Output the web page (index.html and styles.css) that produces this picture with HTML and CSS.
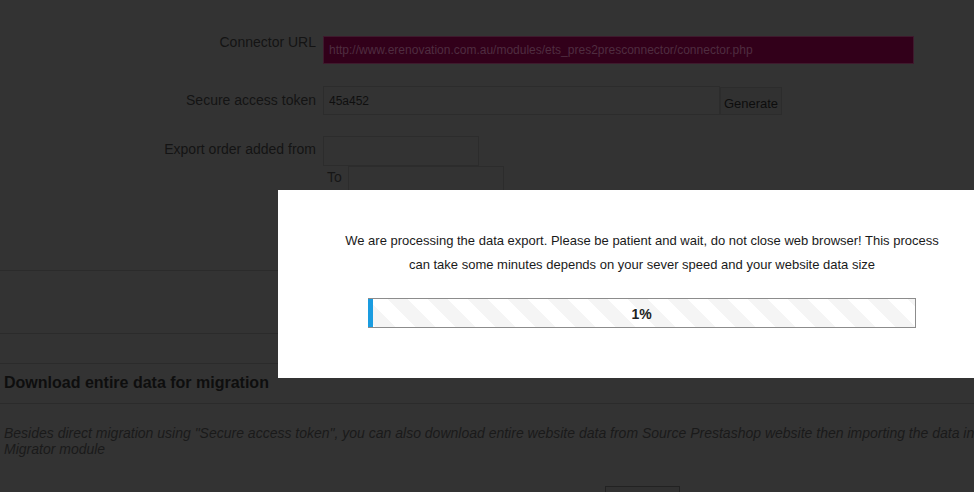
FILE: index.html
```html
<!DOCTYPE html>
<html>
<head>
<meta charset="utf-8">
<link rel="stylesheet" href="styles.css">
</head>
<body>
<div class="page">
  <form class="form">
    <div class="row row-url">
      <div class="lbl">Connector URL</div>
      <div class="ctrl"><input class="inp inp-url" type="text" value="http://www.erenovation.com.au/modules/ets_pres2presconnector/connector.php"></div>
    </div>
    <div class="row row-token">
      <div class="lbl">Secure access token</div>
      <div class="ctrl"><input class="inp inp-token" type="text" value="45a452"><button type="button" class="btn-gen">Generate</button></div>
    </div>
    <div class="row row-date">
      <div class="lbl">Export order added from</div>
      <div class="ctrl ctrl-col">
        <input class="inp inp-date" type="text">
        <div class="to-row"><span class="to">To</span><input class="inp inp-date" type="text"></div>
      </div>
    </div>
  </form>
  <div class="sep sep1"></div>
  <div class="blank"></div>
  <div class="sep"></div>
  <div class="gap"></div>
  <div class="sep"></div>
  <h3 class="heading">Download entire data for migration</h3>
  <div class="sep"></div>
  <p class="desc">Besides direct migration using "Secure access token", you can also download entire website data from Source Prestashop website then importing the data into Migrator module</p>
  <div class="dl-row"><button type="button" class="btn-dl">Download</button></div>
</div>

<div class="modal">
  <p class="msg">We are processing the data export. Please be patient and wait, do not close web browser! This process can take some minutes depends on your sever speed and your website data size</p>
  <div class="progress">
    <div class="fill" style="width:1%"></div>
    <span class="pct">1%</span>
  </div>
</div>
</body>
</html>
```
FILE: styles.css
```css
html, body {
  margin: 0;
  padding: 0;
  width: 974px;
  height: 492px;
  overflow: hidden;
  background: #333333;
  font-family: "Liberation Sans", Arial, sans-serif;
}
.page {
  padding-top: 36px;
  color: #1b1b1b;
}
.form {
  margin: 0;
}
.row {
  display: grid;
  grid-template-columns: 316px 1fr;
  column-gap: 7px;
}
.row .lbl {
  text-align: right;
  font-size: 14px;
  line-height: 16px;
  color: #141414;
}
.row-url .lbl { margin-top: -2px; }
.row-token { margin-top: 22px; }
.row-token .lbl { padding-top: 6px; }
.row-date { margin-top: 21px; }
.row-date .lbl { padding-top: 5px; }
.ctrl { display: flex; }
.ctrl-col { flex-direction: column; align-items: flex-start; }
.inp {
  box-sizing: border-box;
  font-family: "Liberation Sans", Arial, sans-serif;
  font-size: 12px;
  padding: 0 5px;
  margin: 0;
  outline: none;
  border: 1px solid #2c2c2c;
  background: #333333;
  color: #0f0f0f;
}
.inp-url {
  width: 591px;
  height: 28px;
  background: #32001a;
  border-color: #3e1a2d;
  color: #4f2d40;
  padding-bottom: 1px;
}
.inp-token {
  width: 397px;
  height: 29px;
}
.btn-gen {
  box-sizing: border-box;
  width: 62px;
  height: 28px;
  margin: 1px 0 0 0;
  padding: 4px 0 0;
  border: 1px solid #2c2c2c;
  background: #313131;
  color: #0d0d0d;
  font-family: "Liberation Sans", Arial, sans-serif;
  font-size: 13px;
}
.inp-date {
  width: 156px;
  height: 30px;
}
.to-row {
  display: flex;
  align-items: flex-start;
}
.to {
  width: 25px;
  padding: 3px 0 0 4px;
  box-sizing: border-box;
  font-size: 14px;
  line-height: 16px;
  color: #161616;
}
.to-row .inp-date { height: 29px; }
.sep {
  height: 1px;
  background: #2b2b2b;
}
.sep1 { margin-top: 75px; }
.blank { height: 62px; }
.gap { height: 29px; }
.heading {
  margin: 0;
  padding: 0 4px;
  height: 39px;
  line-height: 38px;
  font-size: 16px;
  font-weight: bold;
  color: #0e0e0e;
}
.desc {
  margin: 0;
  padding: 21px 4px 0;
  font-size: 14px;
  line-height: 16px;
  font-style: italic;
  color: #1a1a1a;
  width: 1000px;
}
.dl-row {
  padding-top: 29px;
  padding-left: 605px;
}
.btn-dl {
  box-sizing: border-box;
  width: 75px;
  height: 24px;
  border: 1px solid #222;
  background: #313131;
  color: #0d0d0d;
  font-family: "Liberation Sans", Arial, sans-serif;
  font-size: 13px;
  padding: 2px 0 0;
}

/* modal over the dimmed page */
.modal {
  position: fixed;
  left: 278px;
  top: 190px;
  width: 728px;
  height: 188px;
  box-sizing: border-box;
  background: #ffffff;
  padding: 39px 55px 0;
  font-family: "Liberation Sans", Arial, sans-serif;
}
.msg {
  margin: 0;
  text-align: center;
  font-size: 13px;
  line-height: 24px;
  color: #1a1a1a;
}
.progress {
  position: relative;
  box-sizing: border-box;
  width: 548px;
  height: 30px;
  margin: 21px auto 0;
  border: 1px solid #8c8c8c;
  border-left: 0;
  background-color: #f5f5f5;
  background-image: linear-gradient(45deg,
    #ffffff 25%, transparent 25%, transparent 50%,
    #ffffff 50%, #ffffff 75%, transparent 75%, transparent);
  background-size: 40px 40px;
}
.fill {
  height: 100%;
  background: #1a9ce0;
}
.pct {
  position: absolute;
  left: 0;
  right: 0;
  top: 1px;
  line-height: 28px;
  text-align: center;
  font-size: 14px;
  font-weight: bold;
  color: #222222;
}
```
